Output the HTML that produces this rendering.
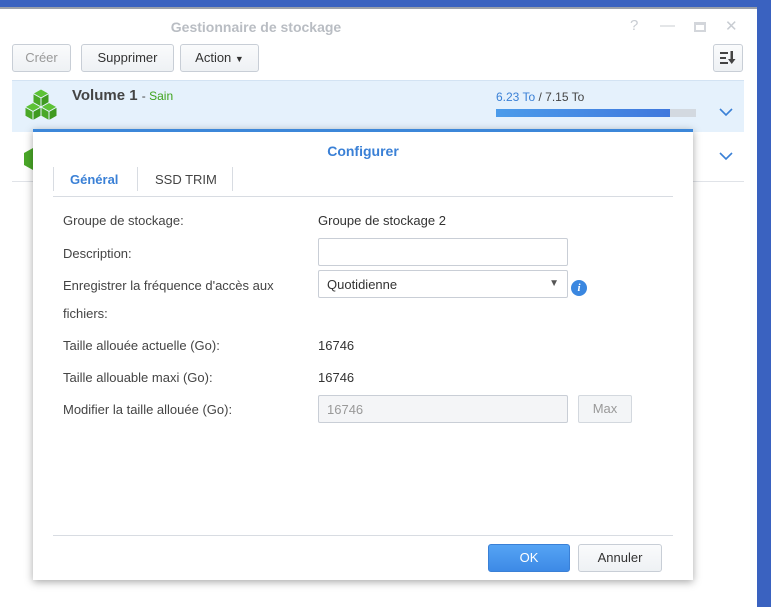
<!DOCTYPE html>
<html><head><meta charset="utf-8"><style>
*{box-sizing:border-box;margin:0;padding:0}
body{width:771px;height:601px;overflow:hidden;background:#3a62c0;font-family:"Liberation Sans",sans-serif;font-size:13px;color:#333;position:relative}
.win{position:absolute;left:0;top:7px;width:757px;height:600px;background:#fff;border-top:2px solid #9aa0aa}
.wt{position:absolute;top:10px;left:0;width:512px;text-align:center;font-weight:bold;font-size:14px;color:#b9bdc3}
.ctl{position:absolute;top:8px;color:#c8ccd2;font-size:15px}
.btn{position:absolute;top:35px;height:28px;border:1px solid #c8ced6;border-radius:3px;background:linear-gradient(#fafbfc,#eef1f4);font-size:13px;line-height:26px;text-align:center;color:#333}
.row1{position:absolute;left:12px;top:71px;width:732px;height:52px;background:#e5f1fc;border-top:1px solid #d3e3f3}
.dlg{position:absolute;left:33px;top:129px;width:660px;height:451px;background:#fff;border-top:3px solid #3c87d9;box-shadow:0 2px 8px rgba(0,0,0,.35)}
.lbl{position:absolute;left:30px;font-size:13px;color:#444}
.val{position:absolute;left:285px;font-size:13px;color:#333}
.inp{position:absolute;left:285px;width:250px;height:28px;border:1px solid #c9ced6;border-radius:2px;background:#fff}
</style></head><body>
<div class="win">
<div class="wt">Gestionnaire de stockage</div>
<div class="ctl" style="left:630px">?</div>
<div class="ctl" style="left:660px">—</div>
<div style="position:absolute;left:694px;top:13px;width:12px;height:10px;border:2px solid #d3d6db;border-top-width:3px"></div>
<div class="ctl" style="left:725px">✕</div>
<div class="btn" style="left:12px;width:59px;color:#999">Créer</div>
<div class="btn" style="left:81px;width:93px">Supprimer</div>
<div class="btn" style="left:180px;width:79px">Action <span style="font-size:9px">▼</span></div>
<div class="btn" style="left:713px;width:30px"><svg width="18" height="16" viewBox="0 0 18 16" style="margin-top:5px"><g fill="#444"><rect x="1" y="2" width="8" height="2"/><rect x="1" y="7" width="6" height="2"/><rect x="1" y="12" width="8" height="2"/><rect x="11.5" y="1" width="2.5" height="9"/><polygon points="9,9 16.5,9 12.75,14"/></g></svg></div>
<div class="row1">
<svg style="position:absolute;left:12px;top:8px" width="34" height="36" viewBox="0 0 34 36"><g stroke="#e5f1fc" stroke-width="1" stroke-linejoin="round">
<polygon fill="#5cc236" points="17,0 25,4.5 17,9 9,4.5"/><polygon fill="#4aa828" points="9,4.5 17,9 17,18 9,13.5"/><polygon fill="#3f9a20" points="25,4.5 17,9 17,18 25,13.5"/>
<polygon fill="#5cc236" points="9,13.5 17,18 9,22.5 1,18"/><polygon fill="#4aa828" points="1,18 9,22.5 9,31.5 1,27"/><polygon fill="#3f9a20" points="17,18 9,22.5 9,31.5 17,27"/>
<polygon fill="#5cc236" points="25,13.5 33,18 25,22.5 17,18"/><polygon fill="#4aa828" points="17,18 25,22.5 25,31.5 17,27"/><polygon fill="#3f9a20" points="33,18 25,22.5 25,31.5 33,27"/>
</g></svg>
<div style="position:absolute;left:60px;top:6px;font-size:15px;font-weight:bold;color:#444">Volume 1 <span style="font-size:12px;font-weight:normal;color:#444">- </span><span style="font-size:12px;font-weight:normal;color:#3fa31c">Sain</span></div>
<div style="position:absolute;left:484px;top:9px;font-size:12px;color:#444"><span style="color:#3a80d6">6.23 To</span> / 7.15 To</div>
<div style="position:absolute;left:484px;top:28px;width:200px;height:8px;background:#d3d9e0"><div style="width:174px;height:8px;background:linear-gradient(90deg,#4b9bea,#3f78dd)"></div></div>
<svg style="position:absolute;left:707px;top:27px" width="14" height="9" viewBox="0 0 14 9"><polyline points="1,1 7,7 13,1" fill="none" stroke="#3a80d6" stroke-width="1.6"/></svg>
</div>
<div style="position:absolute;left:12px;top:123px;width:732px;height:50px;border-bottom:1px solid #e0e3e8">
<svg style="position:absolute;left:12px;top:16px" width="12" height="22" viewBox="0 0 12 22"><polygon fill="#4aa828" points="0,5 9,0 12,2 12,20 9,22 0,17"/></svg>
<svg style="position:absolute;left:707px;top:20px" width="14" height="9" viewBox="0 0 14 9"><polyline points="1,1 7,7 13,1" fill="none" stroke="#3a80d6" stroke-width="1.6"/></svg>
</div>
</div>
<div class="dlg">
<div style="position:absolute;top:11px;width:100%;text-align:center;font-weight:bold;font-size:14px;color:#3a80d6">Configurer</div>
<div style="position:absolute;left:20px;top:35px;width:620px;height:30px;border-bottom:1px solid #d8dce2"></div>
<div style="position:absolute;left:20px;top:35px;width:1px;height:24px;background:#d8dce2"></div>
<div style="position:absolute;left:104px;top:35px;width:1px;height:24px;background:#d8dce2"></div>
<div style="position:absolute;left:199px;top:35px;width:1px;height:24px;background:#d8dce2"></div>
<div style="position:absolute;left:37px;top:40px;font-weight:bold;color:#3a80d6">Général</div>
<div style="position:absolute;left:122px;top:40px;color:#444">SSD TRIM</div>
<div class="lbl" style="top:81px">Groupe de stockage:</div><div class="val" style="top:81px">Groupe de stockage 2</div>
<div class="lbl" style="top:114px">Description:</div><div class="inp" style="top:106px"></div>
<div class="lbl" style="top:140px;line-height:28px">Enregistrer la fréquence d'accès aux<br>fichiers:</div>
<div class="inp" style="top:138px;padding:6px 8px">Quotidienne<span style="position:absolute;right:8px;top:7px;font-size:10px;color:#555">▼</span></div>
<div style="position:absolute;left:538px;top:148px;width:16px;height:16px;border-radius:50%;background:#3a87e0;color:#fff;font-size:11px;font-weight:bold;font-style:italic;text-align:center;line-height:16px;font-family:'Liberation Serif',serif">i</div>
<div class="lbl" style="top:206px">Taille allouée actuelle (Go):</div><div class="val" style="top:206px">16746</div>
<div class="lbl" style="top:238px">Taille allouable maxi (Go):</div><div class="val" style="top:238px">16746</div>
<div class="lbl" style="top:270px">Modifier la taille allouée (Go):</div>
<div class="inp" style="top:263px;background:#f4f5f7;color:#999;padding:6px 8px">16746</div>
<div style="position:absolute;left:545px;top:263px;width:54px;height:28px;border:1px solid #d3d8de;border-radius:2px;background:#f3f5f7;color:#999;text-align:center;line-height:26px">Max</div>
<div style="position:absolute;left:20px;top:403px;width:620px;height:1px;background:#d8dce2"></div>
<div style="position:absolute;left:455px;top:412px;width:82px;height:28px;border:1px solid #3a80d6;border-radius:3px;background:linear-gradient(#55a4f4,#3d8ae6);color:#fff;text-align:center;line-height:26px">OK</div>
<div style="position:absolute;left:545px;top:412px;width:84px;height:28px;border:1px solid #c8ced6;border-radius:3px;background:linear-gradient(#fafbfc,#eef1f4);text-align:center;line-height:26px">Annuler</div>
</div>
</body></html>
